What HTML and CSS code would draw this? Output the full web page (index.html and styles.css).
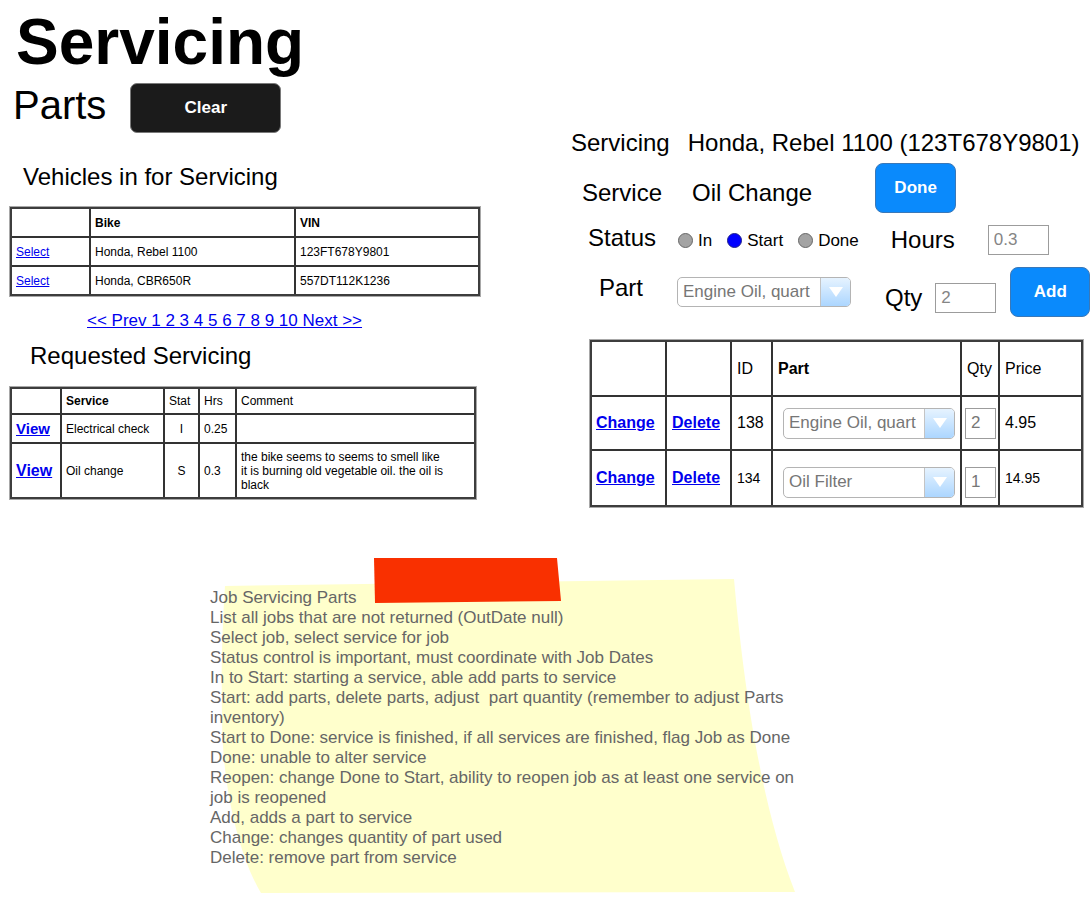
FILE: index.html
```html
<!DOCTYPE html>
<html lang="en">
<head>
<meta charset="utf-8">
<title>Servicing</title>
<link rel="stylesheet" href="styles.css">
</head>
<body>
<div class="page">
  <div class="top">
    <div class="left">
      <h1 class="title">Servicing</h1>
      <div class="parts-row">
        <span class="parts-label">Parts</span>
        <button class="btn btn-dark">Clear</button>
      </div>

      <h2 class="section-title vehicles-title">Vehicles in for Servicing</h2>
      <table class="grid vehicles">
        <tr><th class="v1"></th><th class="v2 bold">Bike</th><th class="v3 bold">VIN</th></tr>
        <tr><td><a href="#" class="link">Select</a></td><td>Honda, Rebel 1100</td><td>123FT678Y9801</td></tr>
        <tr><td><a href="#" class="link">Select</a></td><td>Honda, CBR650R</td><td>557DT112K1236</td></tr>
      </table>

      <div class="pager"><a href="#" class="link">&lt;&lt; Prev 1 2 3 4 5 6 7 8 9 10 Next &gt;&gt;</a></div>

      <h2 class="section-title requested-title">Requested Servicing</h2>
      <table class="grid requests">
        <tr class="rq-head"><th class="q1"></th><th class="q2 bold">Service</th><th class="q3">Stat</th><th class="q4">Hrs</th><th class="q5">Comment</th></tr>
        <tr class="rq-row1"><td><a href="#" class="link view">View</a></td><td>Electrical check</td><td class="center">I</td><td>0.25</td><td></td></tr>
        <tr class="rq-row2"><td><a href="#" class="link view view-lg">View</a></td><td>Oil change</td><td class="center">S</td><td>0.3</td><td><div class="comment">the bike seems to seems to smell like it is burning old vegetable oil. the oil is black</div></td></tr>
      </table>
    </div>

    <div class="right">
      <div class="row r-vehicle">
        <span class="lbl">Servicing</span>
        <span class="val vehicle-val">Honda, Rebel 1100 (123T678Y9801)</span>
      </div>
      <div class="row r-service">
        <span class="lbl service-lbl">Service</span>
        <span class="val service-val">Oil Change</span>
        <button class="btn btn-blue btn-done">Done</button>
      </div>
      <div class="row r-status">
        <span class="lbl status-lbl">Status</span>
        <div class="radios">
          <label class="radio-item"><input type="radio" class="radio" name="status"><span class="radio-text">In</span></label>
          <label class="radio-item"><input type="radio" class="radio" name="status" checked><span class="radio-text">Start</span></label>
          <label class="radio-item"><input type="radio" class="radio" name="status"><span class="radio-text">Done</span></label>
        </div>
        <span class="lbl hours-lbl">Hours</span>
        <input type="text" class="field hours-field" value="0.3">
      </div>
      <div class="row r-part">
        <span class="lbl part-lbl">Part</span>
        <div class="select part-select"><span class="select-text">Engine Oil, quart</span><span class="select-arrow"></span></div>
        <span class="lbl qty-lbl">Qty</span>
        <input type="text" class="field qty-field" value="2">
        <button class="btn btn-blue btn-add">Add</button>
      </div>

      <table class="grid parts">
        <tr class="p-head">
          <th class="p1"></th><th class="p2"></th><th class="p3">ID</th><th class="p4 bold">Part</th><th class="p5">Qty</th><th class="p6">Price</th>
        </tr>
        <tr class="p-row1">
          <td><a href="#" class="link action">Change</a></td>
          <td><a href="#" class="link action">Delete</a></td>
          <td>138</td>
          <td><div class="select cell-select"><span class="select-text">Engine Oil, quart</span><span class="select-arrow"></span></div></td>
          <td class="qty-cell"><input type="text" class="field cell-qty" value="2"></td>
          <td>4.95</td>
        </tr>
        <tr class="p-row2">
          <td><a href="#" class="link action">Change</a></td>
          <td><a href="#" class="link action">Delete</a></td>
          <td>134</td>
          <td><div class="select cell-select lower"><span class="select-text">Oil Filter</span><span class="select-arrow"></span></div></td>
          <td class="qty-cell"><input type="text" class="field cell-qty lower" value="1"></td>
          <td>14.95</td>
        </tr>
      </table>
    </div>
  </div>

  <div class="note">
    <svg class="note-paper" viewBox="0 0 600 341" width="600" height="341" aria-hidden="true">
      <path d="M15,28 L524,21 C532,110 548,240 585,334 L51,335 C30,300 12,230 12,160 C11,100 13,60 15,28 Z" fill="#ffffcc"/>
      <path d="M164,0 L347,0 L351,43 L165,45 Z" fill="#f93000"/>
    </svg>
    <div class="note-text">
      <div>Job Servicing Parts</div>
      <div>List all jobs that are not returned (OutDate null)</div>
      <div>Select job, select service for job</div>
      <div>Status control is important, must coordinate with Job Dates</div>
      <div>In to Start: starting a service, able add parts to service</div>
      <div>Start: add parts, delete parts, adjust&nbsp; part quantity (remember to adjust Parts inventory)</div>
      <div>Start to Done: service is finished, if all services are finished, flag Job as Done</div>
      <div>Done: unable to alter service</div>
      <div>Reopen: change Done to Start, ability to reopen job as at least one service on job is reopened</div>
      <div>Add, adds a part to service</div>
      <div>Change: changes quantity of part used</div>
      <div>Delete: remove part from service</div>
    </div>
  </div>
</div>
</body>
</html>
```

FILE: styles.css
```css
* { box-sizing: border-box; }

body {
  margin: 0;
  font-family: "Liberation Sans", Arial, sans-serif;
  color: #000;
  background: #fff;
}

.page { width: 1091px; }

.top {
  display: flex;
  align-items: flex-start;
}

.left {
  flex: none;
  width: 490px;
}

.right {
  flex: none;
  width: 520px;
  margin-left: 81px;
  padding-top: 129px;
}

/* ---------- left column ---------- */
.title {
  margin: 10px 0 0 16px;
  font-size: 64px;
  line-height: 64px;
  font-weight: 700;
}

.parts-row {
  display: flex;
  align-items: flex-start;
  margin: 9px 0 0 13px;
}

.parts-label {
  font-size: 40px;
  line-height: 40px;
  margin-top: 2px;
}

.btn {
  font-family: "Liberation Sans", Arial, sans-serif;
  font-weight: 700;
  font-size: 17px;
  color: #fff;
  padding: 0;
  cursor: pointer;
}

.btn-dark {
  margin-left: 24px;
  width: 151px;
  height: 50px;
  background: #1b1b1b;
  border: 1px solid #7a7a7a;
  border-radius: 7px;
}

.btn-blue {
  background: #0a8afc;
  border: 1px solid #3a78b8;
  border-radius: 8px;
}

.section-title {
  margin: 0;
  font-size: 24px;
  line-height: 28px;
  font-weight: 400;
}

.vehicles-title { margin: 30px 0 0 23px; }
.requested-title { margin: 11px 0 0 30px; }

.link { color: #0000ee; text-decoration: underline; }

/* tables */
.grid {
  border-collapse: separate;
  border-spacing: 0;
  border: 2px solid #3d3d3d;
  box-shadow: 0 0 0 1px #a8a8a8;
  table-layout: fixed;
}

.grid th,
.grid td {
  border-right: 2px solid #333;
  border-bottom: 2px solid #333;
  padding: 0 4px;
  text-align: left;
  vertical-align: middle;
  font-weight: 400;
}

.grid tr > :last-child { border-right: 0; }
.grid tr:last-child > * { border-bottom: 0; }

.grid .bold { font-weight: 700; }
.grid .center { text-align: center; }

.vehicles {
  margin: 16px 0 0 10px;
  width: 470px;
  font-size: 12px;
}
.vehicles th, .vehicles td { height: 29px; }
.vehicles tr:last-child td { height: 27px; }
.vehicles .v1 { width: 79px; }
.vehicles .v2 { width: 205px; }
.vehicles .v3 { width: 182px; }

.pager {
  margin: 15px 0 0 87px;
  font-size: 17px;
  line-height: 20px;
}

.requests {
  margin: 17px 0 0 10px;
  width: 466px;
  font-size: 12px;
}
.requests .q1 { width: 50px; }
.requests .q2 { width: 103px; }
.requests .q3 { width: 35px; }
.requests .q4 { width: 37px; }
.requests .q5 { width: 237px; }
.rq-head > * { height: 26px; }
.rq-row1 > * { height: 29px; }
.rq-row2 > * { height: 53px; }

.view { font-weight: 700; font-size: 15px; }
.view-lg { font-size: 16px; }

.comment {
  width: 205px;
  line-height: 14px;
}

/* ---------- right column ---------- */
.row {
  display: flex;
  align-items: flex-start;
}

.lbl, .val {
  font-size: 24px;
  line-height: 28px;
  white-space: nowrap;
}

.vehicle-val { margin-left: 18px; }

.r-service { margin-top: 6px; }
.service-lbl { margin: 16px 0 0 11px; }
.service-val { margin: 16px 0 0 30px; }
.btn-done { margin-left: 63px; width: 81px; height: 50px; }

.r-status { margin-top: 11px; }
.status-lbl { margin-left: 17px; }

.radios {
  display: flex;
  gap: 15px;
  margin-left: 22px;
}

.radio-item {
  display: flex;
  align-items: flex-start;
}

.radio {
  appearance: none;
  -webkit-appearance: none;
  width: 15px;
  height: 15px;
  margin: 9px 0 0 0;
  border-radius: 50%;
  background: #a3a3a3;
  border: 1px solid #676767;
}

.radio:checked {
  background: #0000ff;
  border-color: #20208a;
}

.radio-text {
  margin: 7px 0 0 5px;
  font-size: 17px;
  line-height: 20px;
}

.hours-lbl { margin: 2px 0 0 32px; }

.field {
  margin: 0;
  border: 1px solid #9c9c9c;
  padding: 0 0 0 5px;
  font-family: "Liberation Sans", Arial, sans-serif;
  font-size: 17px;
  color: #858585;
  background: #fff;
  outline: none;
}

.hours-field {
  margin: 1px 0 0 33px;
  width: 61px;
  height: 30px;
}

.r-part { margin-top: 12px; }
.part-lbl { margin: 7px 0 0 28px; }

.select {
  display: flex;
  align-items: center;
  border: 1px solid #b4b4b4;
  border-radius: 5px;
  background: #fff;
  overflow: hidden;
}

.select-text {
  flex: 1;
  padding-left: 5px;
  font-size: 17px;
  color: #767676;
  white-space: nowrap;
  overflow: hidden;
}

.select-arrow {
  flex: none;
  width: 30px;
  align-self: stretch;
  display: flex;
  align-items: center;
  justify-content: center;
  border-left: 1px solid #c4c4c4;
  background: linear-gradient(#e6f3ff, #acd6ff);
}

.select-arrow::after {
  content: "";
  border-left: 7px solid transparent;
  border-right: 7px solid transparent;
  border-top: 10px solid #fff;
}

.part-select {
  margin: 10px 0 0 34px;
  width: 174px;
  height: 30px;
}

.qty-lbl { margin: 17px 0 0 34px; }

.qty-field {
  margin: 16px 0 0 13px;
  width: 61px;
  height: 30px;
}

.btn-add {
  margin-left: 14px;
  width: 80px;
  height: 50px;
}

.parts {
  margin: 23px 0 0 19px;
  width: 493px;
  font-size: 16px;
}
.parts th, .parts td { padding: 0 5px; }
.parts tr > :first-child { padding-left: 4px; }
.parts .p1 { width: 75px; }
.parts .p2 { width: 65px; }
.parts .p3 { width: 41px; }
.parts .p4 { width: 189px; }
.parts .p5 { width: 38px; }
.parts .p6 { width: 81px; }
.p-head > * { height: 55px; }
.p-row1 > * { height: 54px; }
.p-row2 > * { height: 54px; font-size: 14px; }

.action { font-weight: 700; font-size: 16px; }

.cell-select {
  margin-left: 5px;
  width: 172px;
  height: 31px;
}

.parts .qty-cell { padding: 0 0 0 3px; }

.cell-qty {
  display: block;
  width: 31px;
  height: 31px;
  color: #777;
}

.lower { margin-top: 8px; }

/* ---------- sticky note ---------- */
.note {
  position: relative;
  margin: 51px 0 0 210px;
  padding-top: 30px;
  width: 590px;
  height: 341px;
}

.note-paper {
  position: absolute;
  left: 0;
  top: 0;
}

.note-text {
  position: relative;
  font-size: 17px;
  line-height: 20px;
  color: #666;
}
```
